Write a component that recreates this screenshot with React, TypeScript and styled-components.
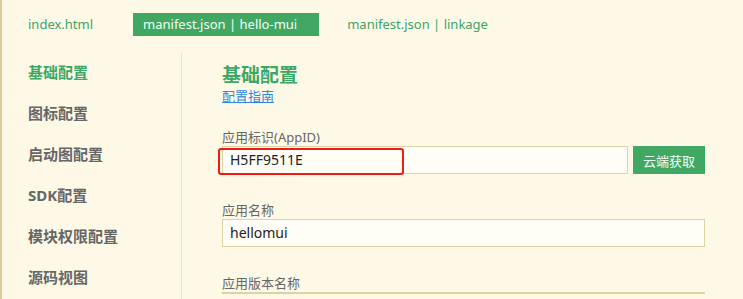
import React from 'react';
import styled, { createGlobalStyle } from 'styled-components';

const GlobalStyle = createGlobalStyle`
  html, body {
    margin: 0;
    padding: 0;
    background: #fef9e7;
  }
  body {
    font-family: "Noto Sans", "Noto Sans CJK SC", sans-serif;
    overflow: hidden;
  }
`;

const Page = styled.div`
  height: 299px;
  border-left: 2px solid #dbcd9e;
  background: #fef9e7;
  display: flex;
  flex-direction: column;
`;

const TabBar = styled.div`
  height: 52px;
  box-sizing: border-box;
  padding: 13px 0 0 16px;
  display: flex;
  align-items: flex-start;
  gap: 18px;
`;

const Tab = styled.div<{ $active?: boolean }>`
  height: 23px;
  line-height: 23px;
  padding: 0 22px 0 10px;
  font-size: 13px;
  white-space: nowrap;
  color: ${p => (p.$active ? '#f2fff4' : '#3aa46a')};
  background: ${p => (p.$active ? '#41a863' : 'transparent')};
`;

const Main = styled.div`
  flex: 1;
  display: flex;
  min-height: 0;
`;

const Sidebar = styled.nav`
  width: 153px;
  padding-left: 26px;
  border-right: 1px solid #eee4c6;
  display: flex;
  flex-direction: column;
`;

const NavItem = styled.div<{ $active?: boolean }>`
  height: 41px;
  line-height: 41px;
  font-size: 15px;
  font-weight: bold;
  color: ${p => (p.$active ? '#3ba866' : '#666666')};
  white-space: nowrap;
`;

const Content = styled.section`
  flex: 1;
  padding: 11px 38px 0 40px;
  display: flex;
  flex-direction: column;
`;

const Heading = styled.h2`
  margin: 0;
  font-size: 19px;
  line-height: 24px;
  font-weight: bold;
  color: #3ba866;
`;

const GuideLink = styled.a`
  align-self: flex-start;
  font-size: 13px;
  line-height: 18px;
  color: #2f88e0;
  text-decoration: underline;
  margin-bottom: 23px;
`;

const Field = styled.div`
  display: flex;
  flex-direction: column;
  margin-bottom: 27px;
`;

const Label = styled.label`
  font-size: 13px;
  line-height: 18px;
  color: #666666;
`;

const InputRow = styled.div`
  display: flex;
  gap: 5px;
`;

const InputWrap = styled.div`
  position: relative;
  flex: 1;
  display: flex;
`;

const Input = styled.div`
  flex: 1;
  height: 28px;
  box-sizing: border-box;
  border: 1px solid #dcd2a6;
  background: #fffdf5;
  padding-left: 7px;
  font-size: 14px;
  line-height: 26px;
  color: #222222;
`;

const Highlight = styled.div`
  position: absolute;
  left: -4px;
  top: 2px;
  width: 186px;
  height: 27px;
  box-sizing: border-box;
  border: 2px solid #f01c14;
  border-radius: 3px;
  pointer-events: none;
`;

const CloudButton = styled.button`
  width: 72px;
  height: 28px;
  border: none;
  background: #41a863;
  color: #f4fff6;
  font-family: inherit;
  font-size: 13px;
  padding: 0;
  cursor: pointer;
`;

const navItems = ['基础配置', '图标配置', '启动图配置', 'SDK配置', '模块权限配置', '源码视图'];

const App: React.FC = () => {
  return (
    <>
      <GlobalStyle />
      <Page>
        <TabBar>
          <Tab>index.html</Tab>
          <Tab $active>manifest.json | hello-mui</Tab>
          <Tab>manifest.json | linkage</Tab>
        </TabBar>
        <Main>
          <Sidebar>
            {navItems.map((item, i) => (
              <NavItem key={item} $active={i === 0}>
                {item}
              </NavItem>
            ))}
          </Sidebar>
          <Content>
            <Heading>基础配置</Heading>
            <GuideLink href="#">配置指南</GuideLink>
            <Field>
              <Label>应用标识(AppID)</Label>
              <InputRow>
                <InputWrap>
                  <Input>H5FF9511E</Input>
                  <Highlight />
                </InputWrap>
                <CloudButton>云端获取</CloudButton>
              </InputRow>
            </Field>
            <Field>
              <Label>应用名称</Label>
              <Input>hellomui</Input>
            </Field>
            <Field>
              <Label>应用版本名称</Label>
              <Input />
            </Field>
          </Content>
        </Main>
      </Page>
    </>
  );
};

export default App;
